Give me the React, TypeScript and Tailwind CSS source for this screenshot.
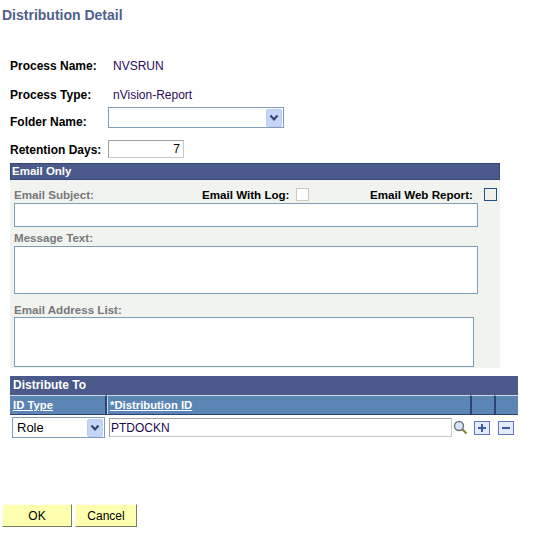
import React from "react";

const font = "font-['Liberation_Sans',Arial,sans-serif]";

function Chevron() {
  return (
    <svg width="10" height="8" viewBox="0 0 10 8">
      <path d="M1.5 1.5 L5 5.5 L8.5 1.5" fill="none" stroke="#2f3f70" strokeWidth="2" />
    </svg>
  );
}

function SelectBox({ value, className }: { value?: string; className: string }) {
  return (
    <div className={`flex items-center justify-between border border-[#7f9db9] bg-white pr-[1px] ${className}`}>
      <span className="pl-[4px] text-[13px] text-black">{value}</span>
      <div className="flex h-[18px] w-[16px] items-center justify-center rounded-[2px] border border-[#b9cdf2] bg-[#c5d5f5]">
        <Chevron />
      </div>
    </div>
  );
}

function FieldRow({ label, value, className }: { label: string; value: string; className: string }) {
  return (
    <div className={`flex items-center ${className}`}>
      <span className="w-[103px] text-[12px] font-bold text-black">{label}</span>
      <span className="text-[12px] text-[#2a0a5c]">{value}</span>
    </div>
  );
}

export default function App() {
  return (
    <div className={`${font} h-[539px] w-[536px] overflow-hidden bg-white`}>
      <h1 className="ml-[2px] pt-[7px] text-[14px] leading-[16px] font-bold text-[#4f5f8e]">Distribution Detail</h1>

      <div className="ml-[10px] mt-[35px] w-[508px]">
        <FieldRow label="Process Name:" value="NVSRUN" className="h-[16px]" />
        <FieldRow label="Process Type:" value="nVision-Report" className="mt-[13px] h-[16px]" />

        <div className="mt-[4px] flex h-[21px] items-center">
          <span className="w-[98px] pt-[8px] text-[12px] font-bold text-black">Folder Name:</span>
          <SelectBox className="h-[21px] w-[176px]" />
        </div>

        <div className="mt-[12px] flex h-[18px] items-center">
          <span className="w-[98px] pt-[1px] text-[12px] font-bold text-black">Retention Days:</span>
          <div className="h-[18px] w-[76px] border border-t-[#a0a0a0] border-l-[#a0a0a0] border-r-[#c8c8c8] border-b-[#c8c8c8] bg-white pr-[3px] text-right text-[12px] leading-[17px] text-black">
            7
          </div>
        </div>

        {/* Email Only */}
        <div className="mt-[5px] w-[490px]">
          <div className="h-[17px] border border-[#34457a] bg-[#4a5a8a] pl-[1px] text-[11.5px] leading-[15px] font-bold text-white">
            Email Only
          </div>
          <div className="h-[188px] bg-[#f1f3ef] pl-[4px] pt-[6px]">
            <div className="flex h-[17px] items-center whitespace-nowrap text-[11.6px] font-bold">
              <span className="w-[188px] shrink-0 text-[#77787a]">Email Subject:</span>
              <span className="w-[94px] shrink-0 text-black">Email With Log:</span>
              <span className="h-[13px] w-[13px] shrink-0 border border-[#cacabd] bg-white" />
              <span className="ml-[61px] w-[114px] shrink-0 text-black">Email Web Report:</span>
              <span className="h-[13px] w-[13px] shrink-0 border border-[#1c5180] bg-[#f0f0ea]" />
            </div>
            <div className="h-[24px] w-[464px] border border-[#7f9db9] bg-white" />
            <div className="mt-[4px] h-[15px] text-[11.6px] leading-[14px] font-bold text-[#77787a]">Message Text:</div>
            <div className="h-[48px] w-[464px] border border-[#7f9db9] bg-white" />
            <div className="mt-[8px] h-[15px] text-[11.6px] leading-[15px] font-bold text-[#77787a]">Email Address List:</div>
            <div className="h-[50px] w-[460px] border border-[#7f9db9] bg-white" />
          </div>
        </div>

        {/* Distribute To */}
        <div className="mt-[8px]">
          <div className="h-[19px] bg-[#4a5a8a] pl-[3px] text-[12px] leading-[19px] font-bold text-white">Distribute To</div>
          <div className="flex h-[20px] border-b border-[#2f4274] bg-[#5a85b5] text-[11.3px] font-bold text-white">
            <div className="w-[97px] border-t border-r-2 border-t-[#d0d8e8] border-r-[#2f4274] pl-[3px] leading-[18px] underline">ID Type</div>
            <div className="w-[363px] border-t border-l border-t-[#d0d8e8] border-l-[#d0d8e8] pl-[2px] leading-[18px] underline">*Distribution ID</div>
            <div className="w-[24px] border-t border-l-2 border-t-[#d0d8e8] border-l-[#2f4274]" />
            <div className="w-[24px] border-t border-l-2 border-t-[#d0d8e8] border-l-[#2f4274]" />
          </div>
          <div className="mt-[2px] flex h-[21px] items-center">
            <SelectBox value="Role" className="ml-[2px] h-[21px] w-[93px]" />
            <div className="ml-[4px] h-[19px] w-[343px] border border-t-[#a0a0a0] border-l-[#a0a0a0] border-r-[#c8c8c8] border-b-[#c8c8c8] bg-white pl-[1px] text-[12px] leading-[18px] text-[#1a0a4c]">
              PTDOCKN
            </div>
            <svg className="ml-[1px]" width="15" height="15" viewBox="0 0 15 15">
              <circle cx="6" cy="6" r="4.5" fill="#d6e6fa" stroke="#6b7278" strokeWidth="1.4" />
              <path d="M9.5 9.5 L13.5 13.5" stroke="#857a30" strokeWidth="2" />
            </svg>
            <svg className="ml-[6px]" width="16" height="14" viewBox="0 0 16 14">
              <rect x="0.5" y="0.5" width="15" height="13" fill="#e4ecfc" stroke="#5f75c2" />
              <path d="M4 7 H12 M8 3 V11" stroke="#3f5aa8" strokeWidth="2" />
            </svg>
            <svg className="ml-[8px]" width="16" height="14" viewBox="0 0 16 14">
              <rect x="0.5" y="0.5" width="15" height="13" fill="#e4ecfc" stroke="#5f75c2" />
              <path d="M4 7 H12" stroke="#3f5aa8" strokeWidth="2" />
            </svg>
          </div>
        </div>
      </div>

      <div className="ml-[2px] mt-[66px] flex gap-[3px]">
        <button className="h-[23px] w-[70px] border border-t-[#fdfdf0] border-l-[#fdfdf0] border-r-[#7a7a6a] border-b-[#7a7a6a] bg-[#ffffb0] text-[12px] text-black">OK</button>
        <button className="h-[23px] w-[62px] border border-t-[#fdfdf0] border-l-[#fdfdf0] border-r-[#7a7a6a] border-b-[#7a7a6a] bg-[#ffffb0] text-[12px] text-black">Cancel</button>
      </div>
    </div>
  );
}
